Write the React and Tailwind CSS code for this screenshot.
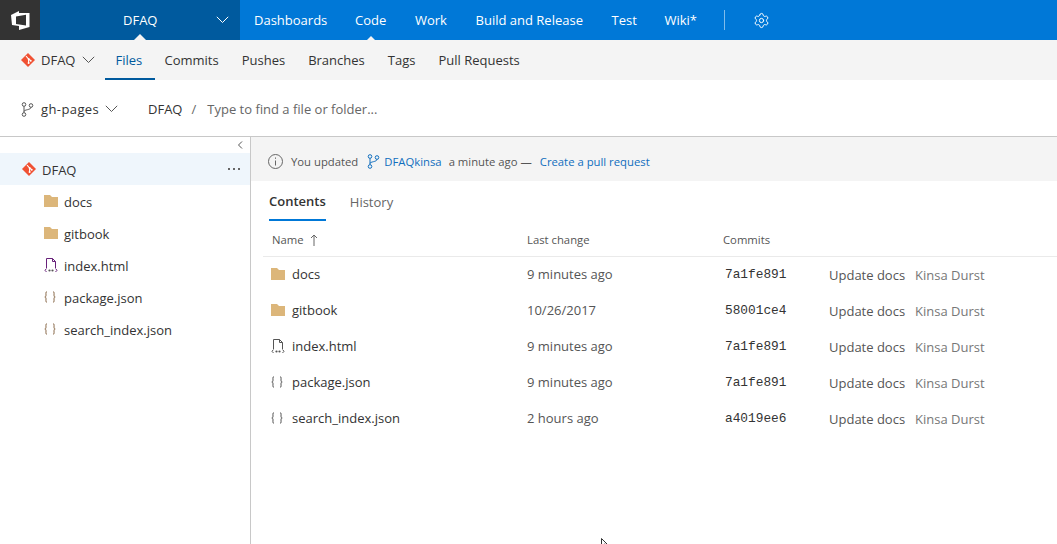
import React from "react";
import { Settings } from "lucide-react";

const Chevron = ({ className = "", color = "#333" }) => (
  <svg width="13" height="8" viewBox="0 0 13 8" className={className} fill="none" stroke={color} strokeWidth="1">
    <path d="M.8.8 6.500 6.500 12.200.8" />
  </svg>
);

const GitIcon = ({ className = "" }) => (
  <svg width="14" height="14" viewBox="0 0 14 14" className={className}>
    <path d="M7 0 14 7 7 14 0 7Z" fill="#f05133" />
    <path d="M5 3.200 7.600 6M7.600 6v4" stroke="#fff" strokeWidth="1.100" fill="none" />
    <path d="M7.600 6 9.600 7.600" stroke="#fff" strokeWidth="1.100" fill="none" />
    <circle cx="7.600" cy="6" r="1" fill="#fff" />
    <circle cx="7.600" cy="10" r="1" fill="#fff" />
    <circle cx="9.700" cy="7.700" r="1" fill="#fff" />
  </svg>
);

const BranchIcon = ({ color = "#555" }) => (
  <svg width="13" height="15" viewBox="0 0 13 15" fill="none" stroke={color} strokeWidth="1">
    <circle cx="3" cy="2.500" r="1.800" />
    <circle cx="3" cy="12.500" r="1.800" />
    <circle cx="10" cy="3.500" r="1.800" />
    <path d="M3 4.300v6.400M3 9.500C3 7.500 10 8 10 5.300" />
  </svg>
);

const Folder = () => (
  <svg width="14" height="12" viewBox="0 0 14 12">
    <path d="M0 0h6l2 2h6v10H0Z" fill="#dcb67a" />
  </svg>
);

const HtmlFile = ({ color = "#555" }) => (
  <svg width="14" height="15" viewBox="0 0 14 15" fill="none">
    <path d="M2.500 10V.5h6l3 3V10M8.500.5v3h3" stroke={color} strokeWidth="1" />
    <path d="M2.500 10.500 1 12.300l1.500 1.700M11.500 10.500l1.500 1.800-1.500 1.700" stroke={color} strokeWidth="1" />
    <circle cx="5.500" cy="12.500" r="1.100" fill="#555" />
    <circle cx="8.500" cy="12.500" r="1.100" fill="#555" />
  </svg>
);

const Json = ({ color = "#555" }) => (
  <svg width="12" height="12" viewBox="0 0 12 12" fill="none" stroke={color} strokeWidth="1">
    <path d="M3 .7C1.500.7 2 2.500 2 4S1.600 6 .8 6c.8 0 1.200.5 1.200 2s-.5 3.300 1 3.300M9 .7c1.500 0 1 1.800 1 3.300s.4 2 1.200 2c-.8 0-1.200.5-1.200 2s.5 3.300-1 3.300" />
  </svg>
);

const icons = {
  folder: <Folder />,
  html: <HtmlFile />,
  json: <Json />,
};

const sideIcons = {
  folder: <Folder />,
  html: <HtmlFile color="#68217a" />,
  json: <Json color="#8a6a4a" />,
};

const tree = [
  ["docs", "folder"],
  ["gitbook", "folder"],
  ["index.html", "html"],
  ["package.json", "json"],
  ["search_index.json", "json"],
];

const rows = [
  ["docs", "folder", "9 minutes ago", "7a1fe891"],
  ["gitbook", "folder", "10/26/2017", "58001ce4"],
  ["index.html", "html", "9 minutes ago", "7a1fe891"],
  ["package.json", "json", "9 minutes ago", "7a1fe891"],
  ["search_index.json", "json", "2 hours ago", "a4019ee6"],
];

export default function App() {
  return (
    <div className="relative w-[1057px] h-[544px] overflow-hidden bg-white text-[13px] text-[#333] font-['Open_Sans','Noto_Sans',sans-serif]">
      {/* Top bar */}
      <header className="flex h-10 bg-[#0078d7] text-white">
        <div className="flex w-10 items-center justify-center bg-[#333]">
          <svg width="20" height="20" viewBox="10 10 20 20" fill="#fff" fillRule="evenodd">
            <path d="M11 15 19 11v2L29.500 13v14L19 30v-4L12 25ZM16 16.500V24L26 25.500V14.800Z" />
          </svg>
        </div>
        <div className="relative flex w-[200px] items-center justify-between bg-[#005a9e] pl-[83px] pr-[11px]">
          <span className="pt-0.5">DFAQ</span>
          <Chevron color="#fff" />
          <span className="absolute bottom-0 left-[94px] h-0 w-0 border-x-[6px] border-b-[6px] border-x-transparent border-b-[#f4f4f4]" />
        </div>
        <nav className="flex items-center pt-0.5">
          <span className="pl-[14px] pr-[13.500px]">Dashboards</span>
          <span className="relative flex h-full items-center px-[14.300px]">
            Code
            <span className="absolute -top-0.5 mt-[36px] left-1/2 h-0 w-0 -translate-x-1/2 border-x-[6px] border-b-[6px] border-x-transparent border-b-[#f4f4f4]" />
          </span>
          <span className="px-[14.300px]">Work</span>
          <span className="px-[14.300px]">Build and Release</span>
          <span className="pl-[14.300px] pr-[13.300px]">Test</span>
          <span className="px-[14.300px]">Wiki*</span>
          <span className="ml-[13px] h-5 w-px -translate-y-px bg-white/50" />
          <Settings className="ml-[28px] -translate-y-px" size={17} strokeWidth={1.400} color="#fff" />
        </nav>
      </header>

      {/* Sub navigation */}
      <div className="flex h-10 items-stretch bg-[#f4f4f4] pl-[21px]">
        <div className="flex items-center">
          <GitIcon />
          <span className="ml-1.5 pt-0.5">DFAQ</span>
          <Chevron className="ml-[7px]" color="#555" />
        </div>
        <div className="ml-2.5 flex w-[50px] items-center border-b-2 border-[#005a9e] pl-2.5 pt-1 text-[#005a9e]">Files</div>
        <div className="ml-[9px] flex items-center gap-[23px] pt-0.5">
          <span>Commits</span>
          <span>Pushes</span>
          <span>Branches</span>
          <span>Tags</span>
          <span>Pull Requests</span>
        </div>
      </div>

      {/* Branch bar */}
      <div className="flex h-[57px] items-center border-b border-[#c8c8c8] pt-0.5 pl-[21px]">
        <BranchIcon />
        <span className="ml-[7px] w-[59px] pt-0.5 tracking-[0.4px]">gh-pages</span>
        <Chevron className="ml-[5px]" color="#555" />
        <span className="ml-[30px] pt-0.5">DFAQ</span>
        <span className="ml-[9px] pt-0.5 text-[#666]">/</span>
        <span className="ml-[11px] pt-0.5 text-[#666]">Type to find a file or folder...</span>
      </div>

      {/* Body */}
      <div className="flex h-[407px]">
        <aside className="w-[251px] shrink-0 border-r border-[#c8c8c8]">
          <div className="flex h-4 items-center justify-end pr-[7px]">
            <svg width="6" height="8" viewBox="0 0 6 8" fill="none" stroke="#555" strokeWidth="1"><path d="M5 .5 1.500 4 5 7.500" /></svg>
          </div>
          <div className="flex h-8 items-center bg-[#eff6fc] pl-[22px] pr-[10px]">
            <GitIcon />
            <span className="ml-1.5 flex-1 pt-[3px]">DFAQ</span>
            <span className="flex gap-[3px]">
              <span className="size-[2px] bg-[#666]" />
              <span className="size-[2px] bg-[#666]" />
              <span className="size-[2px] bg-[#666]" />
            </span>
          </div>
          {tree.map(([name, kind]) => (
            <div key={name} className="flex h-8 items-center pl-11">
              <span className="flex w-5 shrink-0">{sideIcons[kind]}</span>
              <span className="pt-[3px]">{name}</span>
            </div>
          ))}
        </aside>

        <main className="flex-1">
          <div className="flex h-11 items-center bg-[#f4f4f4] pl-[17px] pt-[5px] text-[11.300px]">
            <svg width="15" height="15" viewBox="0 0 15 15" fill="none" stroke="#666" strokeWidth="1">
              <circle cx="7.500" cy="7.500" r="7" />
              <path d="M7.500 6.500v5M7.500 3.500v1.300" />
            </svg>
            <span className="ml-2 pt-0.5 text-[#555]">You updated</span>
            <span className="ml-[9px] flex"><BranchIcon color="#106ebe" /></span>
            <span className="ml-1 pt-0.5 text-[#106ebe]">DFAQkinsa</span>
            <span className="ml-[7px] pt-0.5 text-[#555]">a minute ago —</span>
            <span className="ml-2 pt-0.5 text-[#106ebe]">Create a pull request</span>
          </div>

          <div className="flex h-10 items-stretch gap-6 pl-[18px]">
            <div className="flex items-center border-b-2 border-[#0078d7] pt-1 font-semibold">Contents</div>
            <div className="flex items-center pt-1 text-[#666]">History</div>
          </div>

          <div className="ml-3">
            <div className="grid h-[36px] grid-cols-[264px_196px_106px_1fr] items-center border-b border-[#eaeaea] pt-[3px] text-[11.300px] text-[#555]">
              <div className="flex items-center pl-[9px]">
                <span>Name</span>
                <svg className="ml-[6px]" width="8" height="12" viewBox="0 0 8 12" fill="none" stroke="#666" strokeWidth="1"><path d="M4 12V1M1 4l3-3 3 3" /></svg>
              </div>
              <div>Last change</div>
              <div>Commits</div>
              <div />
            </div>
            {rows.map(([name, kind, when, hash]) => (
              <div key={name} className="grid h-9 grid-cols-[264px_196px_106px_1fr] items-center">
                <div className="flex items-center pl-2">
                  <span className="flex w-[21px] shrink-0 -translate-y-px">{icons[kind]}</span>
                  <span>{name}</span>
                </div>
                <div className="text-[#555]">{when}</div>
                <div className="pl-0.5 font-['Liberation_Mono',monospace] text-[12.800px] text-[#333]">{hash}</div>
                <div className="flex pt-0.5">
                  <span className="w-[86px] text-[#555]">Update docs</span>
                  <span className="text-[#777]">Kinsa Durst</span>
                </div>
              </div>
            ))}
          </div>
        </main>
      </div>

      {/* Mouse pointer */}
      <svg className="absolute left-[601px] top-[538px]" width="8" height="8" viewBox="0 0 8 8" fill="#fff" stroke="#333" strokeWidth="1">
        <path d="M.5.500v8L3 6l4 1Z" />
      </svg>
    </div>
  );
}
